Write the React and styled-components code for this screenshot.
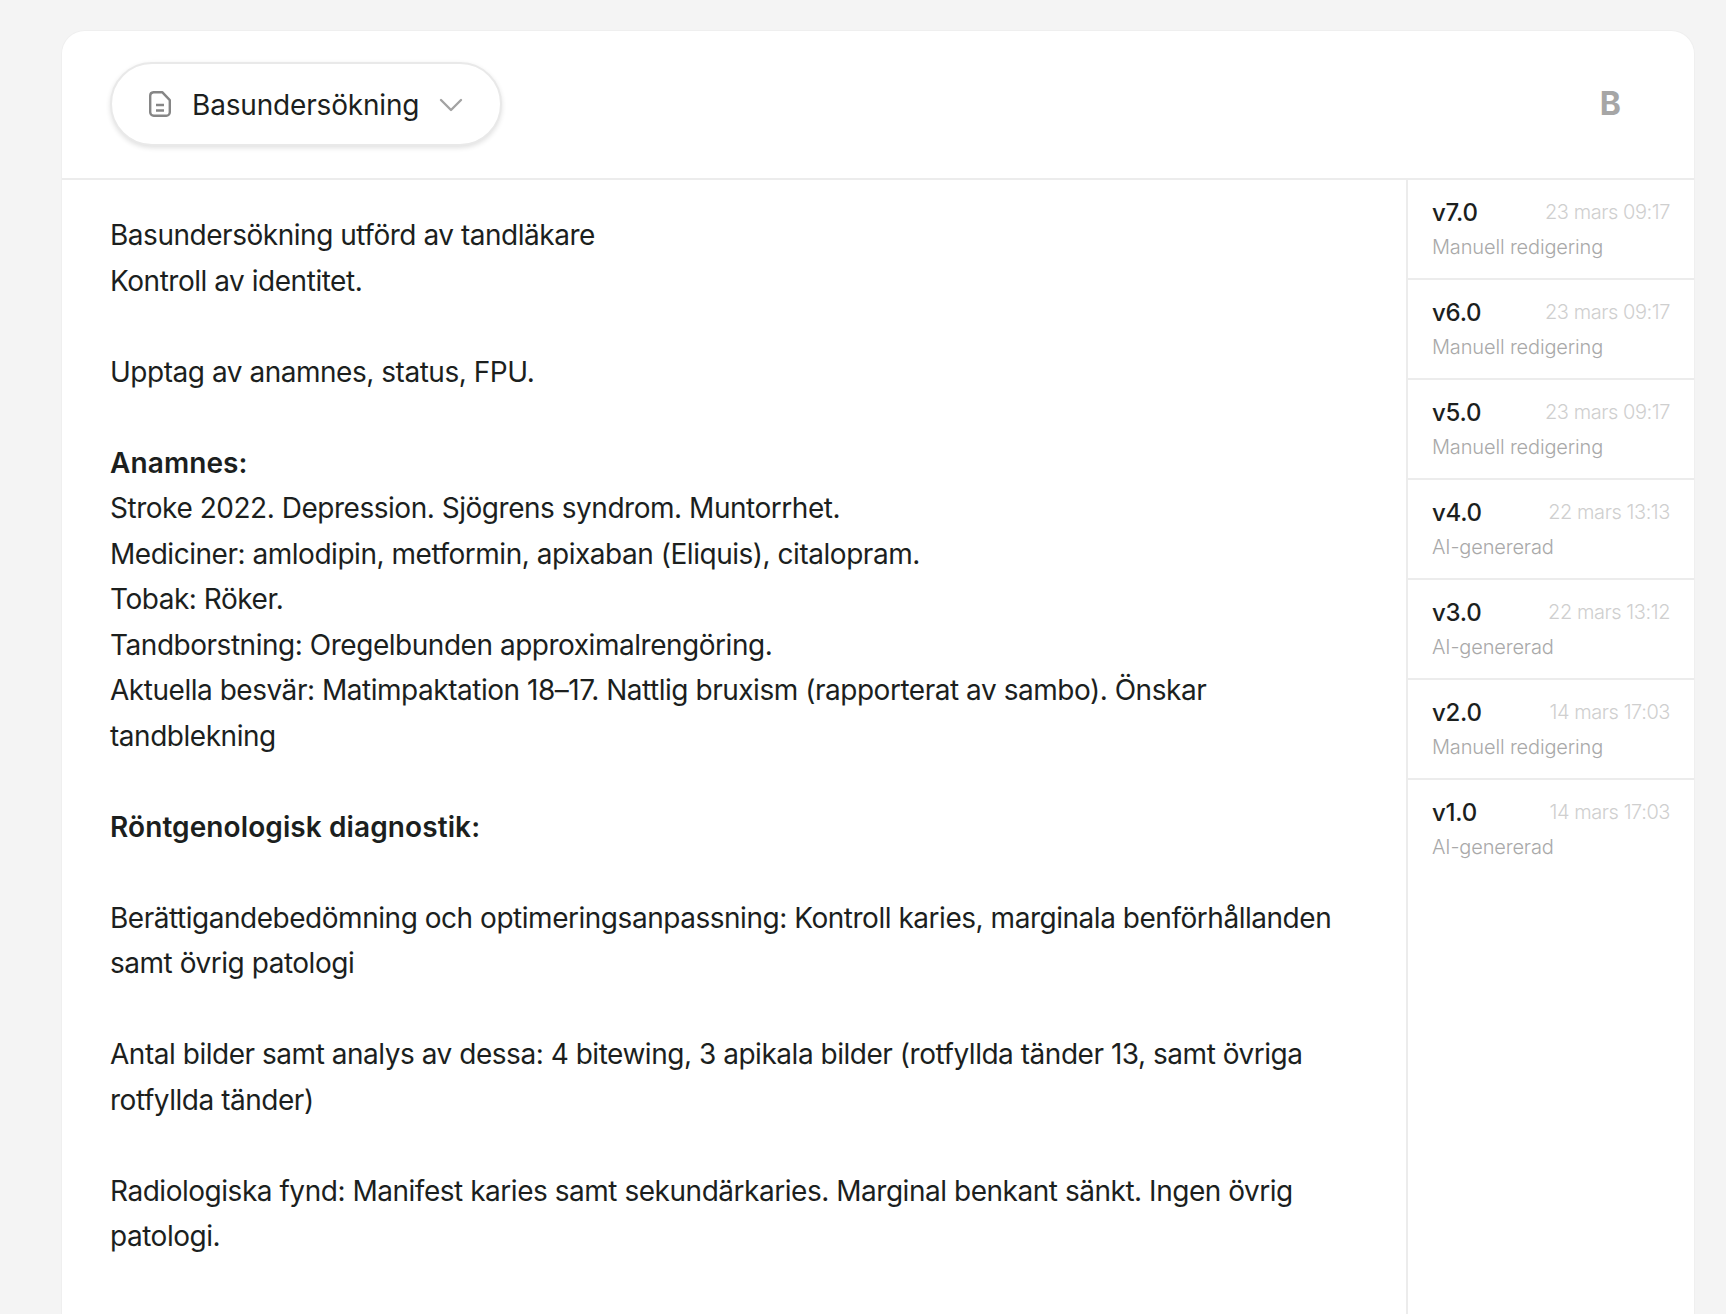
import React from "react";
import styled, { createGlobalStyle } from "styled-components";
import { ChevronDown } from "lucide-react";

const versions = [
  { id: "v7.0", date: "23 mars 09:17", source: "Manuell redigering" },
  { id: "v6.0", date: "23 mars 09:17", source: "Manuell redigering" },
  { id: "v5.0", date: "23 mars 09:17", source: "Manuell redigering" },
  { id: "v4.0", date: "22 mars 13:13", source: "AI-genererad" },
  { id: "v3.0", date: "22 mars 13:12", source: "AI-genererad" },
  { id: "v2.0", date: "14 mars 17:03", source: "Manuell redigering" },
  { id: "v1.0", date: "14 mars 17:03", source: "AI-genererad" },
];

export default function App() {
  return (
    <>
      <GlobalStyle />
      <Card>
        <Header>
          <Pill>
            <DocIcon viewBox="0 0 22 26" fill="none">
              <path d="M4.5 1.2h8.7l7.6 8v12.1a3.5 3.5 0 0 1-3.5 3.5H4.7a3.5 3.5 0 0 1-3.5-3.5V4.7a3.5 3.5 0 0 1 3.3-3.5Z" />
              <path d="M7 14h8M7 19.5h8" />
            </DocIcon>
            <PillLabel>Basundersökning</PillLabel>
            <Chevron size={40} strokeWidth={1.45} />
          </Pill>
          <Initial>B</Initial>
        </Header>
        <Body>
          <Note>
            <p>
              Basundersökning utförd av tandläkare
              <br />
              Kontroll av identitet.
            </p>
            <p>Upptag av anamnes, status, FPU.</p>
            <p>
              <strong>Anamnes:</strong>
              <br />
              Stroke 2022. Depression. Sjögrens syndrom. Muntorrhet.
              <br />
              Mediciner: amlodipin, metformin, apixaban (Eliquis), citalopram.
              <br />
              Tobak: Röker.
              <br />
              Tandborstning: Oregelbunden approximalrengöring.
              <br />
              Aktuella besvär: Matimpaktation 18–17. Nattlig bruxism (rapporterat av sambo). Önskar
              <br />
              tandblekning
            </p>
            <p>
              <strong>Röntgenologisk diagnostik:</strong>
            </p>
            <p>
              Berättigandebedömning och optimeringsanpassning: Kontroll karies, marginala benförhållanden
              <br />
              samt övrig patologi
            </p>
            <p>
              Antal bilder samt analys av dessa: 4 bitewing, 3 apikala bilder (rotfyllda tänder 13, samt övriga
              <br />
              rotfyllda tänder)
            </p>
            <p>
              Radiologiska fynd: Manifest karies samt sekundärkaries. Marginal benkant sänkt. Ingen övrig
              <br />
              patologi.
            </p>
          </Note>
          <Sidebar>
            {versions.map((v) => (
              <VersionRow key={v.id}>
                <VersionTop>
                  <VersionId>{v.id}</VersionId>
                  <VersionDate>{v.date}</VersionDate>
                </VersionTop>
                <VersionSource>{v.source}</VersionSource>
              </VersionRow>
            ))}
          </Sidebar>
        </Body>
      </Card>
    </>
  );
}

const GlobalStyle = createGlobalStyle`
  html, body {
    margin: 0;
    height: 100%;
    overflow: hidden;
    background: #f4f4f4;
    font-family: Inter, "Noto Sans", sans-serif;
    color: #1c1f1e;
  }
`;

const Card = styled.div`
  box-sizing: border-box;
  margin: 30px 31px 0 61px;
  height: 1284px;
  background: #fff;
  border: 1px solid #efefef;
  border-bottom: 0;
  border-radius: 24px 24px 0 0;
  display: flex;
  flex-direction: column;
`;

const Header = styled.header`
  height: 149px;
  flex: none;
  box-sizing: border-box;
  display: flex;
  align-items: center;
  justify-content: space-between;
  padding: 0 73px 1px 48px;
  border-bottom: 2px solid #ececec;
`;

const Pill = styled.div`
  box-sizing: border-box;
  width: 392px;
  height: 84px;
  display: flex;
  align-items: center;
  padding-left: 37px;
  background: #fff;
  border: 2px solid #e9e9e9;
  border-radius: 42px;
  box-shadow: 0 2px 5px rgba(0, 0, 0, 0.12);
`;

const DocIcon = styled.svg`
  width: 22px;
  height: 26px;
  flex: none;
  stroke: #868686;
  stroke-width: 2.4;
  stroke-linejoin: round;
`;

const PillLabel = styled.span`
  margin: 2px 0 0 21px;
  font-size: 28px;
  letter-spacing: -0.17px;
  white-space: nowrap;
`;

const Chevron = styled(ChevronDown)`
  flex: none;
  margin: 2px 0 0 12px;
  color: #a3a3a3;
`;

const Initial = styled.div`
  margin-top: -1px;
  font-size: 32px;
  font-weight: 700;
  color: #a6a6a6;
`;

const Body = styled.div`
  flex: 1;
  display: flex;
  min-height: 0;
`;

const Note = styled.div`
  flex: 1;
  padding: 33px 0 0 48px;
  font-size: 28px;
  font-weight: 370;
  line-height: 45.5px;
  letter-spacing: -0.47px;
  white-space: nowrap;

  p {
    margin: 0 0 45.5px;
  }

  strong {
    font-weight: 600;
    letter-spacing: 0.1px;
  }
`;

const Sidebar = styled.aside`
  width: 288px;
  flex: none;
  box-sizing: border-box;
  border-left: 2px solid #ececec;
`;

const VersionRow = styled.div`
  box-sizing: border-box;
  height: 100px;
  padding: 18px 24px 0 24px;
  border-bottom: 2px solid #ececec;

  &:last-child {
    border-bottom: 0;
  }
`;

const VersionTop = styled.div`
  display: flex;
  align-items: center;
  justify-content: space-between;
`;

const VersionId = styled.span`
  font-size: 24px;
  font-weight: 500;
  letter-spacing: -0.25px;
`;

const VersionDate = styled.span`
  margin-top: -2px;
  font-size: 20px;
  font-weight: 300;
  color: #cfcfcf;
  letter-spacing: -0.43px;
`;

const VersionSource = styled.div`
  margin-top: 8px;
  font-size: 20px;
  font-weight: 350;
  color: #a9a9a9;
  letter-spacing: -0.15px;
`;
